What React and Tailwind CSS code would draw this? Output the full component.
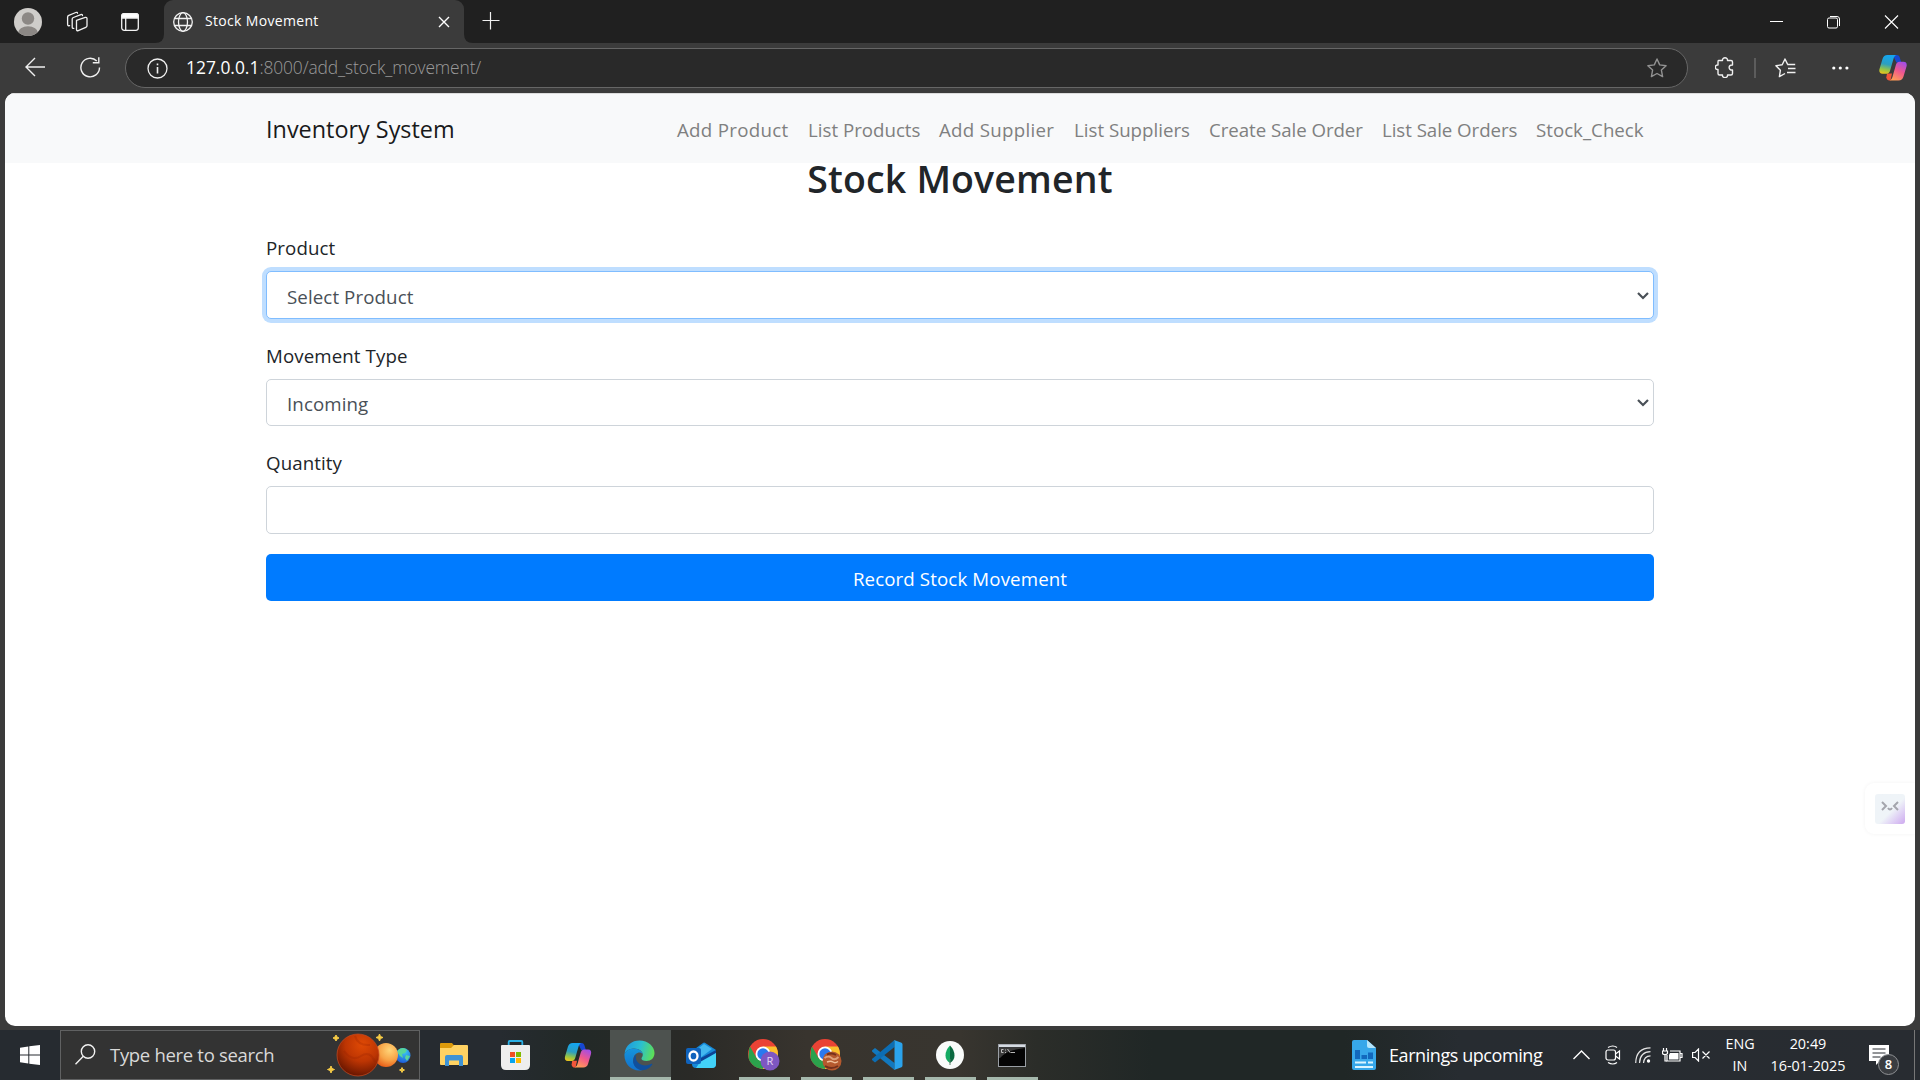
import React from "react";

function Copilot({ id, className }) {
  return (
    <svg viewBox="0 0 28 26" className={className}>
      <defs>
        <linearGradient id={id + "a"} x1="0.3" y1="0" x2="0.1" y2="1">
          <stop offset="0" stopColor="#15a5ee" />
          <stop offset="0.45" stopColor="#2c9fc0" />
          <stop offset="0.75" stopColor="#97c544" />
          <stop offset="1" stopColor="#f5c518" />
        </linearGradient>
        <linearGradient id={id + "b"} x1="0.8" y1="0" x2="0.3" y2="1">
          <stop offset="0" stopColor="#a04de8" />
          <stop offset="0.5" stopColor="#f0588c" />
          <stop offset="1" stopColor="#ff9d55" />
        </linearGradient>
      </defs>
      <path d="M14 0h3.6c2 0 2.8 1.2 3.300 3l1.400 4.500h-5z" fill="#1747d1" />
      <path d="M8 18.500h5l-1.500 7h-1c-2 0-2.600-1.200-3.200-3z" fill="#f2553a" />
      <path d="M8.500 0h9c-1.700.6-2.500 2-3 3.800l-3.300 11.500c-.6 2-1.600 3.400-3.600 3.400H3.500C.8 18.700-.2 16.700.5 14L3.500 4C4.300 1.400 5.800 0 8.500 0z" fill={"url(#" + id + "a)"} />
      <path d="M19.500 25.500h-9c1.700-.6 2.500-2 3-3.800l3.300-11.500c.6-2 1.600-3.400 3.600-3.400h4.100c2.700 0 3.700 2 3 4.700l-3 10c-.8 2.600-2.300 4-5 4z" fill={"url(#" + id + "b)"} />
    </svg>
  );
}

function TabStrip() {
  return (
    <div className="flex h-[43px] bg-[#202020] text-white">
      <div className="flex w-[164px] items-center pl-[14px]">
        <svg width="28" height="28" viewBox="0 0 28 28">
          <defs>
            <clipPath id="avatar"><circle cx="14" cy="14" r="14" /></clipPath>
          </defs>
          <g clipPath="url(#avatar)">
            <rect width="28" height="28" fill="#cfcdca" />
            <circle cx="14" cy="10.500" r="6.200" fill="#8c8885" />
            <ellipse cx="14" cy="25" rx="10" ry="6.700" fill="#8c8885" />
          </g>
        </svg>
        <svg className="ml-[24px]" width="23" height="22" viewBox="0 0 23 22" fill="none" stroke="#f0f0f0" strokeWidth="1.300" strokeLinejoin="round" strokeLinecap="round">
          <path d="M10.500 9.300l8.800-2.900c1-.3 1.700.2 1.700 1.100v7.200c0 .8-.4 1.300-1.200 1.600l-7.600 3.300c-1 .4-1.700 0-1.700-1z" />
          <path d="M7.800 17.300c-1 .2-1.600-.2-1.600-1.100V8.100c0-.8.400-1.300 1.200-1.600L14.800 3.600c1-.4 1.700 0 1.700.9" />
          <path d="M3.600 14.700c-1.200.2-2-.2-2-1.100V5.900c0-.8.400-1.300 1.200-1.600L9.800 1.500c1-.4 1.700 0 1.700.7" />
        </svg>
        <svg className="ml-[32px]" width="18" height="18" viewBox="0 0 18 18" fill="none" stroke="#f2f2f2" strokeWidth="1.300">
          <rect x=".7" y=".7" width="16.600" height="16.600" rx="2.500" />
          <path d="M.7 5V3Q.7.7 3 .7h12Q17.300.7 17.300 3v2z" fill="#fff" />
          <path d="M4.700 5v12.500" />
        </svg>
      </div>
      <div className="relative flex w-[300px] items-center rounded-t-[9px] bg-[#3b3b3b] pl-[9px]">
        <svg className="absolute bottom-0 -left-[9px]" width="9" height="9"><path d="M9 0v9H0Q9 9 9 0z" fill="#3b3b3b" /></svg>
        <svg className="absolute -right-[9px] bottom-0" width="9" height="9"><path d="M0 0v9h9Q0 9 0 0z" fill="#3b3b3b" /></svg>
        <svg width="20" height="20" viewBox="0 0 20 20" fill="none" stroke="#f2f2f2" strokeWidth="1.300">
          <circle cx="10" cy="10" r="9.300" />
          <ellipse cx="10" cy="10" rx="4.500" ry="9.300" />
          <path d="M1.500 6.500h17M1.500 13.500h17" />
        </svg>
        <span className="ml-[12px] w-[225px] -translate-y-px text-[14px] tracking-[0.33px] whitespace-nowrap">Stock Movement</span>
        <svg className="ml-[8px]" width="12" height="12" viewBox="0 0 12 12" stroke="#fff" strokeWidth="1.400"><path d="M1 1l10 10M11 1L1 11" /></svg>
      </div>
      <svg className="mt-[12px] ml-[18px]" width="18" height="18" viewBox="0 0 18 18" stroke="#f0f0f0" strokeWidth="1.200"><path d="M.5 8.500h17M8.500 0v17.500" /></svg>
      <div className="ml-auto flex h-[43px] items-center pr-[21px]">
        <svg width="13" height="13" stroke="#fff"><path d="M0 6.500h13" /></svg>
        <svg className="ml-[44px]" width="13" height="14" viewBox="0 0 13 14" fill="none" stroke="#fff"><rect x=".5" y="3" width="10" height="10" rx="1.500" /><path d="M3 1.500h7Q12.500 1.500 12.500 4v7" /></svg>
        <svg className="ml-[44px]" width="15" height="14" viewBox="0 0 15 14" stroke="#fff" strokeWidth="1.100"><path d="M1 .5l13 13M14 .5L1 13.500" /></svg>
      </div>
    </div>
  );
}

function Toolbar() {
  return (
    <div className="flex h-[50px] items-start bg-[#3b3b3b] pt-[5px] pl-[25px]">
      <svg className="mt-[9px]" width="21" height="20" viewBox="0 0 21 20" fill="none" stroke="#f0f0f0" strokeWidth="1.400"><path d="M20 10H1M10 1L1 10l9 9" /></svg>
      <svg className="mt-[9px] ml-[34px]" width="21" height="21" viewBox="0 0 21 21" fill="none" stroke="#f0f0f0" strokeWidth="1.400">
        <path d="M19.500 10.500a9.300 9.300 0 1 1-2.700-6.500M18.800.3v5.500h-6" />
      </svg>
      <div className="ml-[24px] flex h-[40px] w-[1563px] items-center rounded-full border border-[#666] bg-[#292929] pl-[21px]">
        <svg width="21" height="21" viewBox="0 0 21 21" fill="none" stroke="#f0f0f0" strokeWidth="1.300"><circle cx="10.500" cy="10.500" r="9.500" /><path d="M10.500 9v6.500M10.500 5.500v1.800" strokeWidth="1.600" /></svg>
        <span className="ml-[18px] -translate-y-px text-[17.400px] whitespace-nowrap text-[#9a9a9a]">
          <span className="text-white">127.0.0.1</span><span className="font-light tracking-[-0.12px]">:8000/add_stock_movement/</span>
        </span>
        <svg className="mr-[20px] ml-auto" width="20" height="20" viewBox="0 0 20 20" fill="none" stroke="#929292" strokeWidth="1.400" strokeLinejoin="round"><path d="M10 1l2.700 5.900 6.400.8-4.700 4.400 1.200 6.500L10 15.500l-5.600 3.100 1.200-6.500L.9 7.700l6.400-.8z" /></svg>
      </div>
      <svg className="mt-[9px] ml-[27px]" width="19" height="21" viewBox="0 0 19 21" fill="none" stroke="#f0f0f0" strokeWidth="1.400" strokeLinejoin="round">
        <path d="M3.500 3.500h4c-.5-3.600 5.500-3.600 5 0h3.500q1.500 0 1.500 1.500v3c-4.500-.5-4.500 5.500 0 5v3.500q0 1.500-1.500 1.500h-3.500c.5 3.500-5.500 3.500-5 0h-3q-1.500 0-1.500-1.500v-4c-3.500.5-3.500-5 0-4.500V5q0-1.500.5-1.500z" />
      </svg>
      <div className="mt-[10px] ml-[20px] h-[20px] w-[2px] bg-[#5c5c5c]" />
      <svg className="mt-[10px] ml-[19px]" width="21" height="20" viewBox="0 0 21 20" fill="none" stroke="#f0f0f0" strokeWidth="1.400" strokeLinejoin="round">
        <path d="M12.500 6.100L10 1 7.200 6.800.9 7.700l4.500 4.500-1 6.400 5.600-3.100M12.200 6.500h8" /><path d="M13 10.500h7.500M12 14.500h8.500" />
      </svg>
      <svg className="mt-[18px] ml-[36px]" width="17" height="4" fill="#fff"><circle cx="1.800" cy="2" r="1.600" /><circle cx="8.300" cy="2" r="1.600" /><circle cx="14.900" cy="2" r="1.600" /></svg>
      <Copilot id="bar" className="mt-[7px] ml-[30px] h-[26px] w-[28px]" />
    </div>
  );
}

const NAV = [
  ["Add Product", "w-[111px] tracking-[0.3px]"],
  ["List Products", "w-[111px]"],
  ["Add Supplier", "w-[115px] tracking-[0.3px]"],
  ["List Suppliers", "w-[115px]"],
  ["Create Sale Order", "w-[153px] tracking-[-0.05px]"],
  ["List Sale Orders", "w-[134px] tracking-[-0.05px]"],
  ["Stock_Check", "w-[109px]"],
];

function Field({ label, value, select, focused }) {
  return (
    <div className="mb-[20px] flex flex-col">
      <label className="mb-[10px] h-[30px] text-[18.700px] leading-[34px] tracking-[0.1px] text-[#212529]">{label}</label>
      <div className={"flex h-[47.500px] items-center justify-between rounded-[5px] border bg-white pr-[4px] pl-[20px] " + (focused ? "border-[#80bdff] shadow-[0_0_0_4px_#bfdeff]" : "border-[#ced4da]")}>
        <span className="translate-y-[2px] text-[18.700px] tracking-[0.1px] text-[#495057]">{value}</span>
        {select && <svg className="translate-y-px" width="12" height="8" viewBox="0 0 12 8" fill="none" stroke="#495057" strokeWidth="2.200"><path d="M1 1l5 5 5-5" /></svg>}
      </div>
    </div>
  );
}

function Page() {
  return (
    <div className="relative h-[933px] w-[1910px] overflow-hidden rounded-[10px] bg-white">
      <nav className="h-[70px] border-t border-[#dcdcdc] bg-[#f8f9fa]">
        <div className="mx-auto flex h-full w-[1388px] items-center pr-[9px] text-[18.700px] text-[#7f8080]">
          <span className="translate-y-px text-[23.400px] text-[#191a1a]">Inventory System</span>
          <div className="ml-auto flex gap-[20px]">
            {NAV.map(([t, w]) => <span key={t} className={"translate-y-[2px] whitespace-nowrap " + w}>{t}</span>)}
          </div>
        </div>
      </nav>
      <main className="mx-auto flex w-[1388px] flex-col">
        <h2 className="mb-[30px] h-[38px] text-center text-[37.500px] leading-[32px] font-semibold tracking-[0.15px] text-[#212529]">Stock Movement</h2>
        <Field label="Product" value="Select Product" select focused />
        <Field label="Movement Type" value="Incoming" select />
        <Field label="Quantity" value="" />
        <button className="h-[47px] rounded-[5px] bg-[#007bff] pt-[4px] text-[18.700px] tracking-[0.12px] text-white">Record Stock Movement</button>
      </main>
      <div className="absolute top-[690px] right-0 flex h-[51px] w-[50px] items-center rounded-l-[9px] bg-white pl-[10px] shadow-[0_0_4px_rgba(0,0,0,0.05)]">
        <div className="h-[30px] w-[30px] rounded-[3px] bg-linear-135 from-[#eff4f8] from-55% to-[#cda8ef]">
          <svg width="30" height="30" fill="none" stroke="#a4a5ad" strokeWidth="2"><path d="M7 8l4 4-4 4M23 8l-4 4 4 4M13 14q2 3 4 0" /></svg>
        </div>
      </div>
    </div>
  );
}

function Planets() {
  return (
    <svg width="85" height="46" viewBox="0 0 85 46">
      <defs>
        <radialGradient id="mars" cx=".6" cy=".25" r=".8"><stop offset="0" stopColor="#e04a05" /><stop offset=".5" stopColor="#bd3503" /><stop offset="1" stopColor="#601300" /></radialGradient>
        <radialGradient id="venus" cx=".65" cy=".3" r=".75"><stop offset="0" stopColor="#ffd478" /><stop offset=".55" stopColor="#f7a447" /><stop offset="1" stopColor="#e75b16" /></radialGradient>
        <radialGradient id="earth" cx=".6" cy=".25" r=".8"><stop offset="0" stopColor="#3cc9f4" /><stop offset="1" stopColor="#1c55d8" /></radialGradient>
      </defs>
      <circle cx="76" cy="23.500" r="7.500" fill="url(#earth)" />
      <path d="M71 18q5-4 9 0l-2 3-3 1 1 4-3-2-3-4zM79 23l4 1-3 5-2-3z" fill="#58d69a" />
      <circle cx="59" cy="23" r="12" fill="url(#venus)" />
      <circle cx="31" cy="23" r="21" fill="url(#mars)" stroke="#c84a20" strokeWidth=".7" />
      <path d="M17 19q8 11 17 5t14 6M28 4q3 10 15 9" fill="none" stroke="#942100" strokeWidth="2" opacity=".25" />
      <g fill="#f7cb45" stroke="#f7cb45" strokeLinejoin="round">
        <path d="M9 3l1 2 2 1-2 1-1 2-1-2-2-1 2-1zM52.500 2l1 2.500 2.500 1-2.500 1-1 2.500-1-2.500-2.500-1 2.500-1zM4 34l1 2.500 2.500 1L5 38.500 4 41l-1-2.500-2.500-1 2.500-1zM75 35.500l.8 1.700 1.700.8-1.700.8L75 40.500l-.8-1.700-1.700-.8 1.700-.8z" />
      </g>
    </svg>
  );
}

function Chrome({ id, children }) {
  return (
    <svg width="32" height="32" viewBox="0 0 32 32">
      <defs><clipPath id={id}><circle cx="15" cy="15" r="15" /></clipPath></defs>
      <g clipPath={"url(#" + id + ")"}>
        <rect width="30" height="30" fill="#ea4335" />
        <path d="M15 7.500h16V30H12l9.500-11.300z" fill="#fbc02d" />
        <path d="M1.500 6.500L8.500 19q6 6 13 0L14 31H-1z" fill="#2ba24c" />
      </g>
      <circle cx="15" cy="15" r="7.500" fill="#fff" />
      <circle cx="15" cy="15" r="5.700" fill="#2a79ee" />
      {children}
    </svg>
  );
}

function Explorer() {
  return (
    <svg width="28" height="24" viewBox="0 0 28 24">
      <path d="M0 1q0-1 1-1h11l2.500 3H27v4H0z" fill="#dc9a0b" />
      <path d="M0 5h11l3-3h13q1 0 1 1v18q0 1-1 1H1q-1 0-1-1z" fill="#ffd262" />
      <path d="M5 23V14q0-2 2-2h14q2 0 2 2v9h-4v-5.500H9V23z" fill="#3f93d4" />
    </svg>
  );
}

function Store() {
  return (
    <svg width="29" height="30" viewBox="0 0 29 30">
      <path d="M7.700 6V2q0-1 1-1h11.600q1 0 1 1v4" fill="none" stroke="#2bb0e6" strokeWidth="1.800" />
      <path d="M0 6q0-1 1-1h27q1 0 1 1v19q0 5-5 5H5q-5 0-5-5z" fill="#eee" />
      <path d="M9 12h5v5H9z" fill="#f04e24" /><path d="M15 12h5v5h-5z" fill="#80ba01" />
      <path d="M9 18h5v5H9z" fill="#04a4ee" /><path d="M15 18h5v5h-5z" fill="#ffb901" />
    </svg>
  );
}

function Edge() {
  return (
    <svg width="31" height="31" viewBox="0 0 31 31">
      <defs>
        <linearGradient id="edgetop" x1="0" y1=".4" x2="1" y2=".6"><stop offset="0" stopColor="#1d9be0" /><stop offset=".5" stopColor="#2bbfcf" /><stop offset="1" stopColor="#5fe052" /></linearGradient>
        <linearGradient id="edgeleft" x1="0" y1="0" x2="0" y2="1"><stop offset="0" stopColor="#1595dd" /><stop offset="1" stopColor="#1270cc" /></linearGradient>
      </defs>
      <path d="M.5 14C1.500 5 8 .5 15.500.5 24 .5 30.500 6.500 30.500 13c0 5-3.500 8-8 8-3.500 0-5-1.200-5-2.500 0-.9 1.300-1.500 1.300-4C18.800 11 14 8 9 8.500 4.500 9 1.500 11 .5 14z" fill="url(#edgetop)" />
      <path d="M.4 14.500C1.500 10.500 5.500 8.400 9.500 8.400c5 0 9 2.900 9.300 6.100-1-1.700-3-2.300-4.800-1.700-3.500 1-5.500 5-4.500 9.200 1.200 4.500 5 7.800 9 8C10 32.500.2 26 .4 14.500z" fill="url(#edgeleft)" />
      <path d="M12.500 14.500c-2.500 5.500 2.500 11 9 11 2.700 0 4.500-1 6-1.700.6-.2 1 .2.7.8-2 3.500-6 5.600-9.700 5.600-6-.3-10-5.200-9.300-9.700.3-2.700 1.500-5 3.300-6z" fill="#114f9c" />
    </svg>
  );
}

function Outlook() {
  return (
    <svg width="31" height="27" viewBox="0 0 31 27">
      <path d="M6 9L17 1q1-.8 2.300 0L30 8v14q0 4-4 4H10q-4 0-4-4z" fill="#1689d8" />
      <path d="M9 9l9-7 8 5-12 9z" fill="#43b8ef" />
      <path d="M13 17L30 8v3L15 21z" fill="#0d4496" />
      <path d="M14 20l16-9v11q0 4-4 4H10z" fill="#42d2f8" />
      <rect x="0" y="6" width="15" height="16" rx="2" fill="#0f63bd" />
      <ellipse cx="7.500" cy="14" rx="4" ry="4.500" fill="none" stroke="#fff" strokeWidth="2.300" />
    </svg>
  );
}

function VsCode() {
  return (
    <svg width="31" height="30" viewBox="0 0 31 30">
      <path d="M0 10.500l3-2.500 19.500 15V30L.5 12q-.8-.8-.5-1.500z" fill="#1278be" />
      <path d="M0 20l3 2.500L22.500 7V0L.5 18.500Q-.3 19.300 0 20z" fill="#0c6db3" />
      <path d="M22 0l7.500 2.800q1 .5 1 1.700v21q0 1.200-1 1.700L22 30q.5-.5.500-1.500v-27Q22.500.5 22 0z" fill="#2ba3ec" />
    </svg>
  );
}

function Mongo() {
  return (
    <svg width="28" height="28" viewBox="0 0 28 28">
      <circle cx="14" cy="14" r="14" fill="#f9fbfa" />
      <path d="M14 4.500Q9.500 9 9.500 14.500q0 4.500 4.500 7.500z" fill="#13aa62" />
      <path d="M14 4.500q4.500 4.500 4.500 10 0 4.500-4.500 7.500z" fill="#09683f" />
      <path d="M14 18v6" stroke="#56806a" />
    </svg>
  );
}

function Terminal() {
  return (
    <svg width="28" height="23" viewBox="0 0 28 23">
      <rect x=".5" y=".5" width="27" height="22" fill="#050505" stroke="#9a9fa5" />
      <path d="M1 2h26" stroke="#d5dbe2" strokeWidth="2.500" />
      <path d="M1 4h26Q9 6 2 14H1z" fill="#3b3b3b" />
      <path d="M5.500 5.500h-2v3h2M7.500 5.500v1M7.500 8v1M9.500 5l3 4M13 8.500h4" stroke="#ccc" strokeWidth=".9" fill="none" />
    </svg>
  );
}

const APPS = [
  { el: <Explorer /> },
  { el: <Store /> },
  { el: <Copilot id="task" className="h-[25px] w-[28px]" /> },
  { el: <Edge />, active: true },
  { el: <Outlook /> },
  {
    open: true,
    el: (
      <Chrome id="chromeA">
        <circle cx="22" cy="22" r="9.500" fill="#7e57c2" />
        <text x="22" y="26" fontSize="11" textAnchor="middle" fill="#e4d8f5">R</text>
      </Chrome>
    ),
  },
  {
    open: true,
    el: (
      <Chrome id="chromeB">
        <circle cx="22" cy="22" r="9.500" fill="#b5592e" />
        <path d="M14.500 19q4-3 7 0t7-1" stroke="#dda079" strokeWidth="1.800" fill="none" />
        <path d="M17 23q4-1.500 6 0t5-.5" stroke="#f0c09a" strokeWidth="1.500" fill="none" />
        <path d="M15 27q6 4 13 0M17 15.500q5-2 9 .5" stroke="#74301c" strokeWidth="2" fill="none" />
      </Chrome>
    ),
  },
  { el: <VsCode />, open: true },
  { el: <Mongo />, open: true },
  { el: <Terminal />, open: true },
];

function Taskbar() {
  return (
    <div className="flex h-[50px] bg-[linear-gradient(90deg,#262b30_0%,#262b30_26%,#222927_30%,#2a2a27_36%,#38342e_42%,#38352f_50%,#2b2d29_54%,#202726_60%,#202726_70%,#272c31_76%,#282c31_100%)] text-white">
      <div className="flex w-[60px] items-center justify-center">
        <svg width="20" height="20" viewBox="0 0 20 20" fill="#fff"><path d="M0 2.700L8.300 1.500V9.500H0zM9.300 1.300L20 0v9.500H9.300zM0 10.500h8.300v8L0 17.300zM9.300 10.500H20V20L9.300 18.700z" /></svg>
      </div>
      <div className="flex w-[360px] items-center border border-[#606162] bg-[#333] pl-[14px]">
        <svg className="-mt-[2px]" width="21" height="21" viewBox="0 0 21 21" fill="none" stroke="#f2f2f2" strokeWidth="1.400"><circle cx="13" cy="7.500" r="6.700" /><path d="M8.300 12.300L.5 20.200" /></svg>
        <span className="ml-[14px] w-[181px] text-[18.500px] tracking-[-0.31px] whitespace-nowrap text-[#d9d9d9]">Type here to search</span>
        <div className="ml-[36px]"><Planets /></div>
      </div>
      <div className="ml-[4px] flex gap-px">
        {APPS.map((a, i) => (
          <div key={i} className={"flex h-[50px] w-[61px] flex-col items-center " + (a.active ? "bg-[#4d524f]" : "")}>
            <div className="flex h-[47px] -translate-x-px items-center pt-[3px]">{a.el}</div>
            {a.active && <div className="h-[3px] w-[61px] bg-[#a5b8ac]" />}
            {a.open && <div className="h-[3px] w-[51px] bg-[#a5b8ac]" />}
          </div>
        ))}
      </div>
      <div className="ml-auto flex items-center">
        <svg width="24" height="30" viewBox="0 0 24 30">
          <path d="M2 0h13l9 8v20q0 2-2 2H2q-2 0-2-2V2q0-2 2-2z" fill="#37a7ea" />
          <path d="M15 0l9 8h-7q-2 0-2-2z" fill="#b5e5fb" />
          <path d="M3 10h5v9H3zM9.500 15H15v4H9.500zM16 12.500h5V19h-5z" fill="#1268bd" />
          <path d="M3 22.500h11M16 22.500h5M3 27h18" stroke="#dcf5ff" strokeWidth="2" />
        </svg>
        <span className="ml-[13px] w-[153px] text-[18px] tracking-[-0.43px] whitespace-nowrap">Earnings upcoming</span>
        <svg className="ml-[31px]" width="17" height="10" viewBox="0 0 17 10" fill="none" stroke="#fff" strokeWidth="1.400"><path d="M.5 9l8-8 8 8" /></svg>
        <svg className="ml-[15px]" width="16" height="20" viewBox="0 0 16 20" fill="none" stroke="#fff" strokeWidth="1.200"><rect x="1" y="5" width="9.500" height="10" rx="2" /><path d="M10.500 9l4-3v8l-4-3M3 2.500q5-3 9 0M3 17.500q5 3 9 0" /></svg>
        <svg className="ml-[14px]" width="16" height="16" viewBox="0 0 16 16" fill="none" stroke="#e5e5e5" strokeWidth="1.200"><path d="M.7 16Q1 1 15.500.8M4.500 16Q5 5 15.500 4.700M8.500 16q.5-7 7-7.200" /><circle cx="13.500" cy="14" r="1.700" fill="#fff" stroke="none" /></svg>
        <svg className="ml-[11px]" width="21" height="14" viewBox="0 0 21 14" fill="none" stroke="#fff" strokeWidth="1.200"><path d="M5 7v6h13V3H8M18.500 5.500h1.500v4h-1.500" /><path d="M8 5h8.500v6.500H7V7z" fill="#fff" stroke="none" /><path d="M1.500 0v3M4.500 0v3M.5 3h5v2q0 1.500-2.500 1.500T.5 5zM3 7v6h2" /></svg>
        <svg className="ml-[9px]" width="19" height="14" viewBox="0 0 19 14" fill="none" stroke="#fff" strokeWidth="1.200"><path d="M.6 4.500h2.500L6.500 1v12L3.100 9.500H.6zM10.500 3.500l7 7M17.500 3.500l-7 7" /></svg>
        <div className="ml-[14px] flex w-[30px] flex-col items-center text-[14.300px] leading-[22px]"><span>ENG</span><span>IN</span></div>
        <div className="ml-[14px] flex w-[78px] flex-col items-center text-[14.400px] leading-[22px] whitespace-nowrap"><span>20:49</span><span>16-01-2025</span></div>
        <div className="relative ml-[22px] h-[22px] w-[20px]">
          <svg width="20" height="22" viewBox="0 0 20 22"><path d="M0 1h20v16H11l-4 4v-4H0z" fill="#fff" /><path d="M3.500 5h13M3.500 9h13M3.500 13h8" stroke="#262b30" /></svg>
          <div className="absolute top-[10px] left-[9px] flex h-[21px] w-[21px] items-center justify-center rounded-full border border-[#8f9194] bg-[#3a3d41] text-[13px] font-semibold">8</div>
        </div>
        <div className="ml-[25px] h-[50px] w-px bg-[#777]" />
        <div className="w-[5px]" />
      </div>
    </div>
  );
}

export default function App() {
  return (
    <div className="flex h-[1080px] w-[1920px] flex-col overflow-hidden bg-[#3b3b3b] font-['Open_Sans','Noto_Sans',sans-serif]">
      <TabStrip />
      <Toolbar />
      <div className="flex h-[937px] justify-center bg-[#3b3b3b]">
        <Page />
      </div>
      <Taskbar />
    </div>
  );
}
